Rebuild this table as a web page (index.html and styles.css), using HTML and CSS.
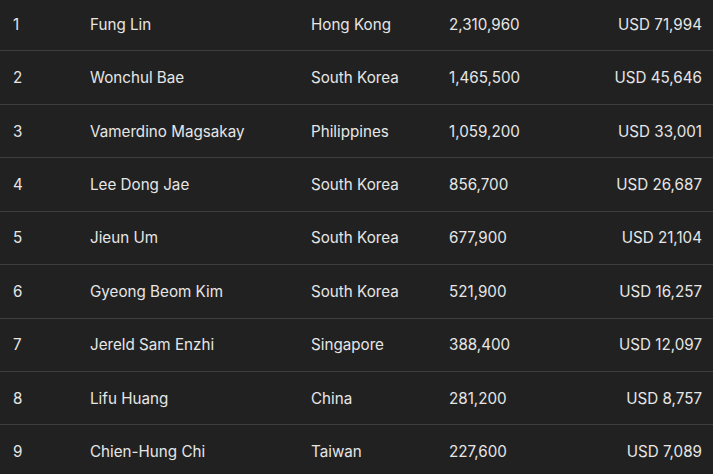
FILE: index.html
```html
<!DOCTYPE html>
<html>
<head>
<meta charset="utf-8">
<link rel="stylesheet" href="styles.css">
</head>
<body>
<div class="table">
  <div class="row"><span class="rank">1</span><span class="name">Fung Lin</span><span class="country">Hong Kong</span><span class="points">2,310,960</span><span class="prize">USD 71,994</span></div>
  <div class="row"><span class="rank">2</span><span class="name">Wonchul Bae</span><span class="country">South Korea</span><span class="points">1,465,500</span><span class="prize">USD 45,646</span></div>
  <div class="row"><span class="rank">3</span><span class="name">Vamerdino Magsakay</span><span class="country">Philippines</span><span class="points">1,059,200</span><span class="prize">USD 33,001</span></div>
  <div class="row"><span class="rank">4</span><span class="name">Lee Dong Jae</span><span class="country">South Korea</span><span class="points">856,700</span><span class="prize">USD 26,687</span></div>
  <div class="row"><span class="rank">5</span><span class="name">Jieun Um</span><span class="country">South Korea</span><span class="points">677,900</span><span class="prize">USD 21,104</span></div>
  <div class="row"><span class="rank">6</span><span class="name">Gyeong Beom Kim</span><span class="country">South Korea</span><span class="points">521,900</span><span class="prize">USD 16,257</span></div>
  <div class="row"><span class="rank">7</span><span class="name">Jereld Sam Enzhi</span><span class="country">Singapore</span><span class="points">388,400</span><span class="prize">USD 12,097</span></div>
  <div class="row"><span class="rank">8</span><span class="name">Lifu Huang</span><span class="country">China</span><span class="points">281,200</span><span class="prize">USD 8,757</span></div>
  <div class="row"><span class="rank">9</span><span class="name">Chien-Hung Chi</span><span class="country">Taiwan</span><span class="points">227,600</span><span class="prize">USD 7,089</span></div>
</div>
</body>
</html>
```
FILE: styles.css
```css
html, body {
  margin: 0;
  padding: 0;
  background: #212121;
  overflow: hidden;
}
body {
  font-family: Inter, "Noto Sans", sans-serif;
  font-size: 15.2px;
  color: #e6e6e6;
}
.table {
  margin-top: -2px;
}
.row {
  display: grid;
  grid-template-columns: 77px 221px 138px 1fr auto;
  align-items: center;
  height: 52.43px;
  border-bottom: 1px solid #3e3e3e;
  padding: 0 11px 0 13px;
  box-sizing: content-box;
}
.prize { text-align: right; }
```
